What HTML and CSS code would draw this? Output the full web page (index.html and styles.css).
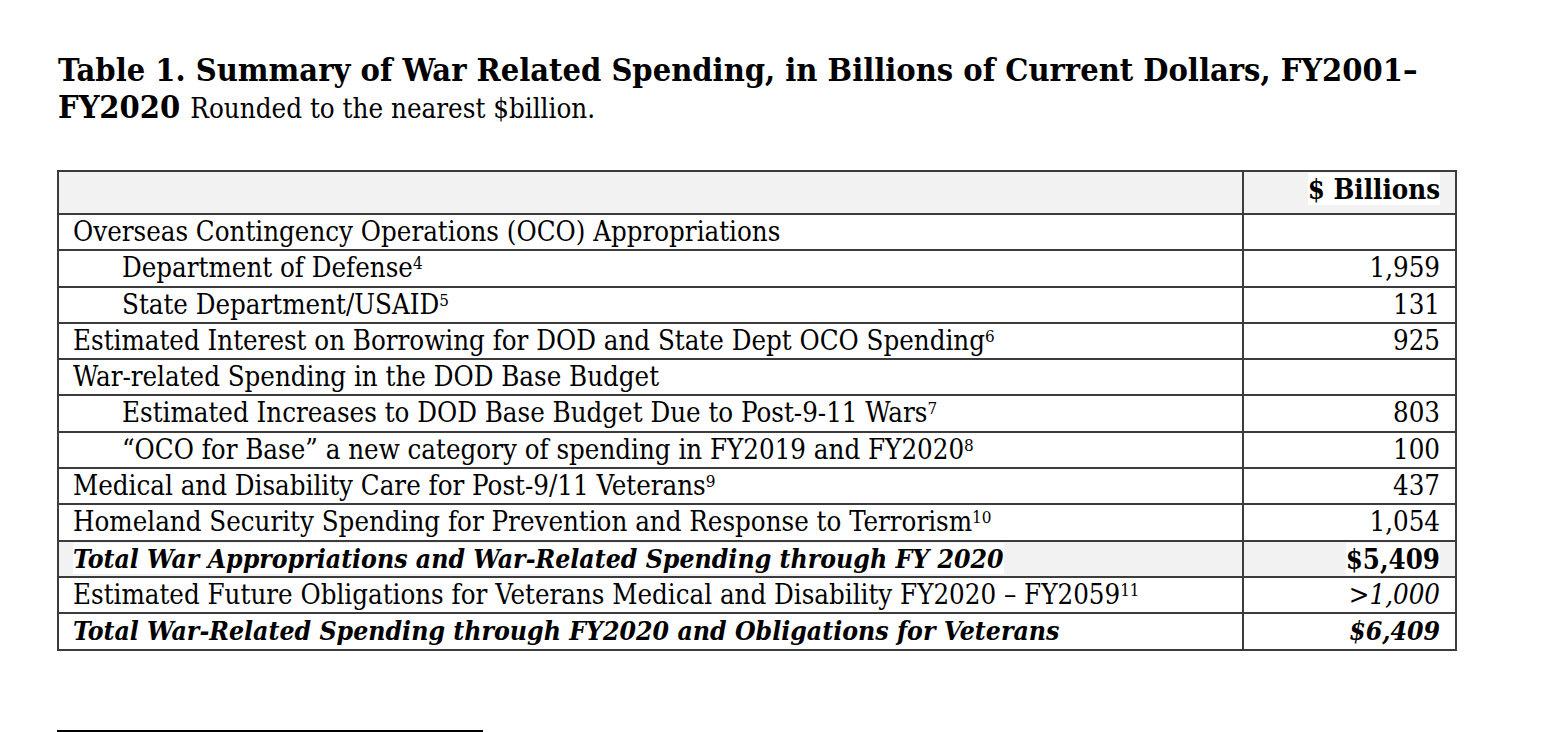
FILE: index.html
```html
<!DOCTYPE html>
<html lang="en">
<head>
<meta charset="utf-8">
<title>Table 1. Summary of War Related Spending</title>
<link rel="stylesheet" href="styles.css">
</head>
<body>
<div class="page">
  <h1 class="title">Table 1. Summary of War Related Spending, in Billions of Current Dollars, FY2001–<br>FY2020 <span class="subtitle">Rounded to the nearest $billion.</span></h1>
  <table class="spend">
    <colgroup><col class="c-label"><col class="c-value"></colgroup>
    <thead>
      <tr class="head"><th></th><th class="num"><span class="hl">$ Billions</span></th></tr>
    </thead>
    <tbody>
      <tr><td>Overseas Contingency Operations (OCO) Appropriations</td><td class="num"></td></tr>
      <tr><td class="ind">Department of Defense<sup>4</sup></td><td class="num">1,959</td></tr>
      <tr><td class="ind">State Department/USAID<sup>5</sup></td><td class="num">131</td></tr>
      <tr><td>Estimated Interest on Borrowing for DOD and State Dept OCO Spending<sup>6</sup></td><td class="num">925</td></tr>
      <tr><td>War-related Spending in the DOD Base Budget</td><td class="num"></td></tr>
      <tr><td class="ind">Estimated Increases to DOD Base Budget Due to Post-9-11 Wars<sup>7</sup></td><td class="num">803</td></tr>
      <tr><td class="ind">“OCO for Base” a new category of spending in FY2019 and FY2020<sup>8</sup></td><td class="num">100</td></tr>
      <tr><td>Medical and Disability Care for Post-9/11 Veterans<sup>9</sup></td><td class="num">437</td></tr>
      <tr><td>Homeland Security Spending for Prevention and Response to Terrorism<sup>10</sup></td><td class="num">1,054</td></tr>
      <tr class="shade"><td class="bi"><span class="hl">Total War Appropriations and War-Related Spending through FY 2020</span></td><td class="num b"><span class="hl">$5,409</span></td></tr>
      <tr><td>Estimated Future Obligations for Veterans Medical and Disability FY2020 – FY2059<sup>11</sup></td><td class="num i">&gt;1,000</td></tr>
      <tr><td class="bi">Total War-Related Spending through FY2020 and Obligations for Veterans</td><td class="num bi">$6,409</td></tr>
    </tbody>
  </table>
  <div class="footrule"></div>
</div>
</body>
</html>
```
FILE: styles.css
```css
html, body {
  margin: 0;
  padding: 0;
  background: #ffffff;
  color: #000000;
}

.page {
  font-family: "DejaVu Serif Condensed", "DejaVu Serif", serif;
  padding: 52px 0 0 57px;
}

.title {
  margin: 0 0 43px 1px;
  font-size: 32.3px;
  line-height: 37px;
  font-weight: bold;
}

.subtitle {
  font-weight: normal;
  font-size: 27.5px;
}

.spend {
  border-collapse: collapse;
  table-layout: fixed;
  width: 1398px;
  font-size: 27.4px;
}

.c-label { width: 1185px; }
.c-value { width: 213px; }

.spend th,
.spend td {
  border: 2px solid #3c3c3c;
  padding: 0 15px 0 14px;
  height: 34.3px;
  line-height: 34px;
  vertical-align: top;
  text-align: left;
  white-space: nowrap;
}

.spend .head th {
  background: #f2f2f2;
  height: 41px;
  font-weight: bold;
}

.spend .num { text-align: right; }

.spend td.ind { padding-left: 63px; }

.shade td { background: #f2f2f2; }

.hl { background: #ffffff; }

.b { font-weight: bold; }
.i { font-style: italic; }
.bi { font-weight: bold; font-style: italic; font-size: 26.4px; }

sup {
  font-size: 0.62em;
  line-height: 0;
  vertical-align: 0.5em;
}

.footrule {
  width: 426px;
  height: 2px;
  background: #000000;
  margin-top: 79px;
}
```
